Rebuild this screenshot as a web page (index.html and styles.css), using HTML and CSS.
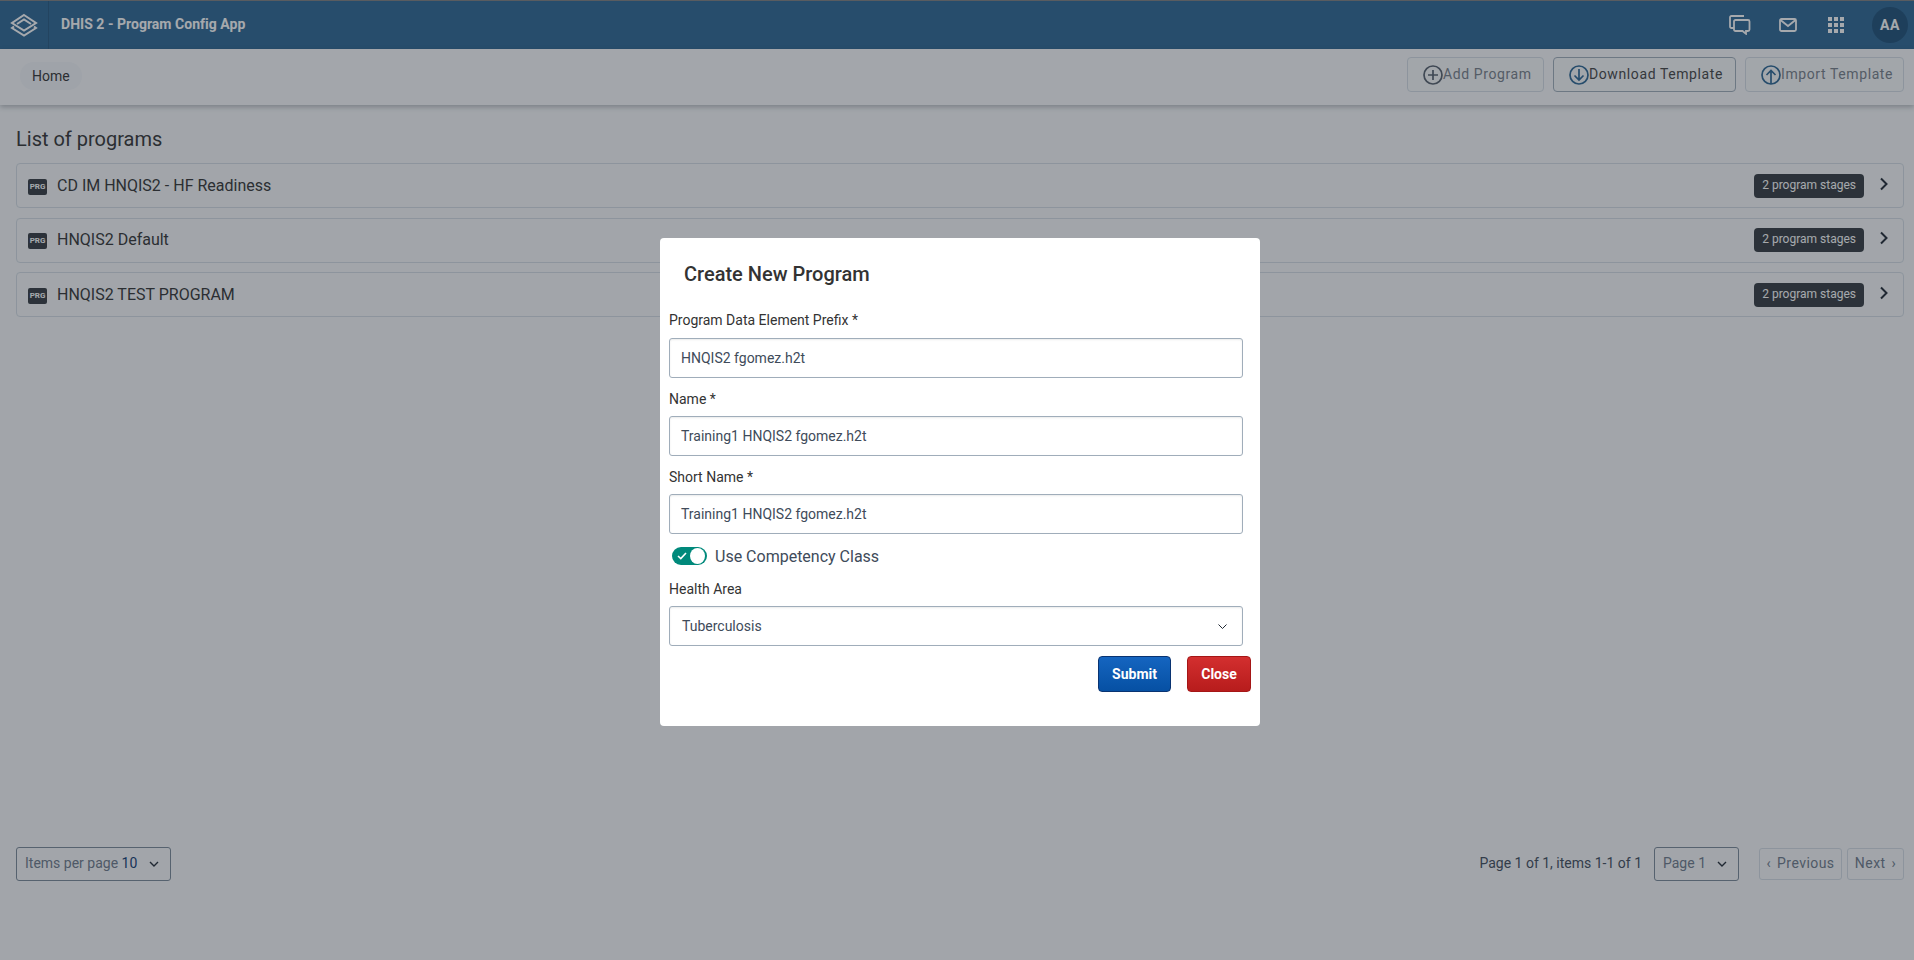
FILE: index.html
```html
<!DOCTYPE html>
<html lang="en">
<head>
    <meta charset="UTF-8">
    <title>DHIS 2 - Program Config App</title>
    <link rel="stylesheet" href="styles.css">
</head>
<body>
<div class="page">
    <header class="topbar">
        <div class="logo-cell">
            <svg width="28" height="24" viewBox="0 0 28 24" fill="none" stroke="#fff" stroke-width="2">
                <path d="M14 2 L26 10 L14 17.5 L2 10 Z"/>
                <path d="M4 13.5 L2 15 L14 22.5 L26 15 L24 13.5"/>
                <path d="M7 11 L14 6.5 L21 11"/>
            </svg>
        </div>
        <div class="app-title">DHIS 2 - Program Config App</div>
        <div class="top-icons">
            <svg class="icon-chat" width="22" height="20" viewBox="0 0 22 20" fill="none" stroke="#fff" stroke-width="1.8">
                <path d="M5 13 H2.5 C1.6 13 1 12.4 1 11.5 V2.5 C1 1.6 1.6 1 2.5 1 H15"/>
                <path d="M5 6.5 C5 5.6 5.6 5 6.5 5 H19 C19.9 5 20.5 5.6 20.5 6.5 V14.5 C20.5 15.4 19.9 16 19 16 H17 V18.8 L13.5 16 H6.5 C5.6 16 5 15.4 5 14.5 Z"/>
            </svg>
            <svg class="icon-mail" width="18" height="14" viewBox="0 0 18 14" fill="none" stroke="#fff" stroke-width="1.8">
                <rect x="1" y="1" width="16" height="12" rx="1.5"/>
                <path d="M1.5 2 L9 8 L16.5 2"/>
            </svg>
            <svg class="icon-apps" width="16" height="16" viewBox="0 0 16 16" fill="#fff">
                <rect x="0" y="0" width="4" height="4"/><rect x="6" y="0" width="4" height="4"/><rect x="12" y="0" width="4" height="4"/>
                <rect x="0" y="6" width="4" height="4"/><rect x="6" y="6" width="4" height="4"/><rect x="12" y="6" width="4" height="4"/>
                <rect x="0" y="12" width="4" height="4"/><rect x="6" y="12" width="4" height="4"/><rect x="12" y="12" width="4" height="4"/>
            </svg>
            <div class="avatar">AA</div>
        </div>
    </header>

    <div class="toolbar">
        <div class="crumb">Home</div>
        <div class="actions">
            <button class="tool-btn disabled add">
                <svg width="20" height="20" viewBox="0 0 20 20" fill="none" stroke="#555f6b" stroke-width="1.7">
                    <circle cx="10" cy="10" r="9"/><path d="M10 5 V15 M5 10 H15"/>
                </svg>
                <span>Add Program</span>
            </button>
            <button class="tool-btn download">
                <svg width="20" height="20" viewBox="0 0 20 20" fill="none" stroke="#2c6693" stroke-width="1.7">
                    <circle cx="10" cy="10" r="9"/><path d="M10 4 V15 M5.5 10.5 L10 15 L14.5 10.5"/>
                </svg>
                <span>Download Template</span>
            </button>
            <button class="tool-btn disabled import">
                <svg width="20" height="20" viewBox="0 0 20 20" fill="none" stroke="#2c6693" stroke-width="1.7">
                    <circle cx="10" cy="10" r="9"/><path d="M10 19 V5.5 M5.5 10 L10 5.5 L14.5 10"/>
                </svg>
                <span>Import Template</span>
            </button>
        </div>
    </div>

    <main class="content">
        <h2 class="list-title">List of programs</h2>
        <div class="program-list">
            <div class="program-row">
                <span class="prg-tag">PRG</span>
                <span class="program-name">CD IM HNQIS2 - HF Readiness</span>
                <span class="stage-badge">2 program stages</span>
                <svg class="row-arrow" width="10" height="14" viewBox="0 0 10 14" fill="none" stroke="#212934" stroke-width="2"><path d="M2 1.5 L7.5 7 L2 12.5"/></svg>
            </div>
            <div class="program-row">
                <span class="prg-tag">PRG</span>
                <span class="program-name">HNQIS2 Default</span>
                <span class="stage-badge">2 program stages</span>
                <svg class="row-arrow" width="10" height="14" viewBox="0 0 10 14" fill="none" stroke="#212934" stroke-width="2"><path d="M2 1.5 L7.5 7 L2 12.5"/></svg>
            </div>
            <div class="program-row">
                <span class="prg-tag">PRG</span>
                <span class="program-name">HNQIS2 TEST PROGRAM</span>
                <span class="stage-badge">2 program stages</span>
                <svg class="row-arrow" width="10" height="14" viewBox="0 0 10 14" fill="none" stroke="#212934" stroke-width="2"><path d="M2 1.5 L7.5 7 L2 12.5"/></svg>
            </div>
        </div>
    </main>

    <footer class="pager">
        <div class="pager-select per-page">
            <span class="muted">Items per page <b class="blue">10</b></span>
            <svg width="10" height="6" viewBox="0 0 10 6" fill="none" stroke="#212934" stroke-width="1.4"><path d="M1 1 L5 5 L9 1"/></svg>
        </div>
        <div class="pager-right">
            <span class="page-info">Page 1 of 1, items 1-1 of 1</span>
            <div class="pager-select page-no">
                <span class="muted">Page 1</span>
                <svg width="10" height="6" viewBox="0 0 10 6" fill="none" stroke="#212934" stroke-width="1.4"><path d="M1 1 L5 5 L9 1"/></svg>
            </div>
            <div class="pager-btns">
                <button class="page-btn prev">‹ Previous</button>
                <button class="page-btn next">Next ›</button>
            </div>
        </div>
    </footer>
</div>

<!-- modal layer -->
<div class="layer">
    <div class="modal">
        <h3 class="modal-title">Create New Program</h3>

        <label class="field-label first">Program Data Element Prefix *</label>
        <div class="field">HNQIS2 fgomez.h2t</div>

        <label class="field-label">Name *</label>
        <div class="field">Training1 HNQIS2 fgomez.h2t</div>

        <label class="field-label">Short Name *</label>
        <div class="field">Training1 HNQIS2 fgomez.h2t</div>

        <div class="switch-row">
            <span class="switch">
                <svg width="10" height="8" viewBox="0 0 10 8" fill="none" stroke="#fff" stroke-width="1.6"><path d="M1 4 L3.8 6.6 L9 1"/></svg>
                <span class="knob"></span>
            </span>
            <span class="switch-text">Use Competency Class</span>
        </div>

        <label class="field-label area">Health Area</label>
        <div class="field select">
            <span>Tuberculosis</span>
            <svg width="9" height="5" viewBox="0 0 9 5" fill="none" stroke="#212934" stroke-width="1"><path d="M.5 .5 L4.5 4.5 L8.5 .5"/></svg>
        </div>

        <div class="modal-actions">
            <button class="btn submit">Submit</button>
            <button class="btn close">Close</button>
        </div>
    </div>
</div>
</body>
</html>
```

FILE: styles.css
```css
* {
    margin: 0;
    padding: 0;
    box-sizing: border-box;
}

html, body {
    height: 100%;
}

body {
    font-family: Roboto, "Liberation Sans", sans-serif;
    font-size: 14px;
    color: #333;
    background-color: #f8f9fa;
    overflow: hidden;
}

button {
    font-family: inherit;
}

.page {
    height: 960px;
    display: flex;
    flex-direction: column;
}

/* header */
.topbar {
    height: 49px;
    flex: none;
    display: flex;
    align-items: center;
    background-color: #2c6693;
    border-top: 1px solid #7f7f7f;
}

.logo-cell {
    width: 49px;
    height: 100%;
    display: flex;
    align-items: center;
    justify-content: center;
    border-right: 1px solid #26587f;
}

.app-title {
    margin: -2px 0 0 12px;
    color: #fff;
    font-weight: 700;
    font-size: 14px;
    letter-spacing: .03px;
}

.top-icons {
    margin-left: auto;
    margin-right: 6px;
    display: flex;
    align-items: center;
}

.icon-chat {
    margin-right: 28px;
}

.icon-mail {
    margin-right: 31px;
}

.icon-apps {
    margin-right: 28px;
}

.avatar {
    width: 36px;
    height: 36px;
    border-radius: 50%;
    display: flex;
    align-items: center;
    justify-content: center;
    background-color: #1d4f77;
    color: #fff;
    font-weight: 700;
    font-size: 14px;
    letter-spacing: .5px;
}

/* toolbar */
.toolbar {
    height: 56px;
    flex: none;
    display: flex;
    align-items: center;
    justify-content: space-between;
    padding: 0 10px 0 20px;
    background-color: #fafbfc;
    box-shadow: 0 2px 5px rgba(33, 41, 52, .3);
}

.crumb {
    margin-top: -2px;
    padding: 6px 12px;
    height: 28px;
    border-radius: 14px;
    background-color: #f3f5f9;
    line-height: 16px;
    color: #333;
}

.actions {
    display: flex;
    gap: 9px;
    margin-top: -5px;
}

.tool-btn {
    height: 35px;
    padding: 0 0 0 15px;
    display: flex;
    align-items: center;
    background-color: #f9fafb;
    border: 1px solid #a0adba;
    border-radius: 4px;
    font-size: 14px;
    letter-spacing: .6px;
    color: #444;
}

.tool-btn span {
    margin-top: -1px;
}

.tool-btn.disabled {
    border-color: #d5dde5;
    color: #777f89;
}

.add {
    width: 137px;
}

.download {
    width: 183px;
}

.import {
    width: 159px;
}

/* list */
.content {
    flex: 1;
    padding: 0 10px 0 16px;
}

.list-title {
    margin-top: 22px;
    font-weight: 400;
    font-size: 20px;
    line-height: 24px;
    color: #333;
}

.program-list {
    margin-top: 12px;
    display: flex;
    flex-direction: column;
    gap: 9.5px;
}

.program-row {
    height: 45px;
    display: flex;
    align-items: center;
    padding: 0 14px 0 11px;
    background-color: #f8f9fa;
    border: 1px solid #d5dde5;
    border-radius: 4px;
}

.prg-tag {
    width: 19px;
    height: 16px;
    margin-top: 2px;
    border-radius: 2px;
    background-color: #343a40;
    color: #fff;
    font-size: 8px;
    font-weight: 700;
    line-height: 16px;
    text-align: center;
}

.program-name {
    margin: -1px 0 0 10px;
    font-size: 16px;
    color: #333;
}

.stage-badge {
    margin-left: auto;
    height: 24px;
    padding: 0 8px;
    border-radius: 4px;
    background-color: #343a40;
    color: #fff;
    font-size: 12px;
    line-height: 23px;
}

.row-arrow {
    margin-left: 15px;
    margin-top: -4px;
}

/* pagination */
.pager {
    flex: none;
    height: 113px;
    padding: 0 10px 79px 16px;
    display: flex;
    align-items: center;
    justify-content: space-between;
}

.pager-select {
    height: 34px;
    display: flex;
    align-items: center;
    justify-content: space-between;
    padding: 0 11px 3px 8px;
    border: 1px solid #7b8998;
    border-radius: 3px;
}

.pager-select svg {
    margin-top: 3px;
}

.per-page {
    width: 155px;
}

.muted {
    color: #6e7a8a;
}

.blue {
    font-weight: 400;
    color: #123a73;
}

.pager-right {
    display: flex;
    align-items: center;
}

.page-info {
    margin-top: -3px;
    color: #404b5a;
}

.page-no {
    width: 85px;
    margin-left: 12px;
}

.pager-btns {
    margin-left: 20px;
    display: flex;
    gap: 5px;
}

.page-btn {
    height: 32px;
    padding: 0 0 3px;
    background-color: #f8f9fa;
    border: 1px solid #d5dde5;
    border-radius: 3px;
    color: #6e7a8a;
    font-size: 14px;
    letter-spacing: .45px;
    word-spacing: 2px;
}

.prev {
    width: 83px;
}

.next {
    width: 57px;
}

/* dialog */
.layer {
    position: fixed;
    top: 0;
    left: 0;
    right: 0;
    bottom: 0;
    padding: 238px 0 0 6px;
    display: flex;
    justify-content: center;
    align-items: flex-start;
    background-color: rgba(33, 41, 50, .4);
}

.modal {
    width: 600px;
    height: 488px;
    padding: 0 9px;
    background-color: #fff;
    border-radius: 4px;
}

.modal-title {
    margin: 24px 0 0 15px;
    font-size: 20px;
    font-weight: 500;
    line-height: 24px;
    color: #333;
}

.field-label {
    display: block;
    margin-top: 13px;
    height: 25px;
    line-height: 16px;
    font-size: 14px;
    color: #333;
}

.field-label.first {
    margin-top: 26px;
    height: 26px;
}

.field-label.area {
    margin-top: 16px;
}

.field {
    width: 574px;
    height: 40px;
    padding: 0 11px;
    display: flex;
    align-items: center;
    border: 1px solid #a0adba;
    border-radius: 3px;
    box-shadow: inset 0 1px 2px rgba(48, 54, 60, .1);
    font-size: 14px;
    color: #404b5a;
}

.select {
    justify-content: space-between;
    padding: 0 15px 0 12px;
}

.switch-row {
    margin: 13px 0 0 3px;
    height: 18px;
    display: flex;
    align-items: center;
}

.switch {
    position: relative;
    width: 35px;
    height: 18px;
    padding-left: 5px;
    display: flex;
    align-items: center;
    border-radius: 9px;
    background-color: #00897b;
}

.knob {
    position: absolute;
    top: 1px;
    right: 2px;
    width: 15px;
    height: 16px;
    border-radius: 50%;
    background-color: #fff;
}

.switch-text {
    margin-left: 8px;
    font-size: 16px;
    color: #404b5a;
}

.modal-actions {
    margin-top: 10px;
    display: flex;
    justify-content: flex-end;
    gap: 16px;
}

.btn {
    height: 36px;
    padding: 0 12px;
    border-radius: 4px;
    color: #fff;
    font-size: 14px;
    font-weight: 700;
}

.submit {
    width: 73px;
    background: linear-gradient(#1565c0, #0650a3);
    border: 1px solid #093371;
}

.close {
    width: 64px;
    background: linear-gradient(#d32f2f, #b71c1c);
    border: 1px solid #a51616;
}
```
